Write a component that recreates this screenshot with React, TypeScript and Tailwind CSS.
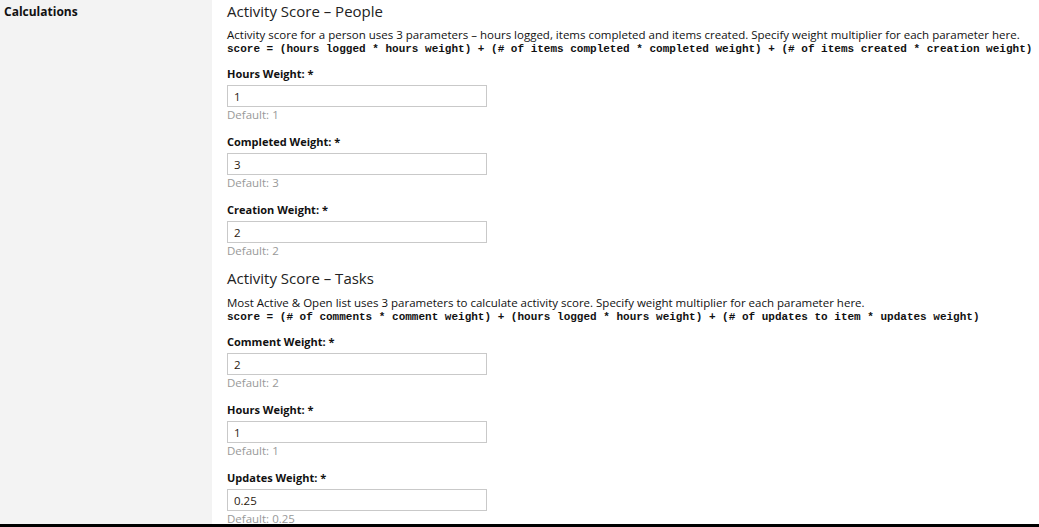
import React from "react";

type Field = { label: string; value: string; def: string };

type Section = {
  title: string;
  desc: string;
  formula: string;
  fields: Field[];
};

const sections: Section[] = [
  {
    title: "Activity Score – People",
    desc: "Activity score for a person uses 3 parameters – hours logged, items completed and items created. Specify weight multiplier for each parameter here.",
    formula:
      "score = (hours logged * hours weight) + (# of items completed * completed weight) + (# of items created * creation weight)",
    fields: [
      { label: "Hours Weight:", value: "1", def: "1" },
      { label: "Completed Weight:", value: "3", def: "3" },
      { label: "Creation Weight:", value: "2", def: "2" },
    ],
  },
  {
    title: "Activity Score – Tasks",
    desc: "Most Active & Open list uses 3 parameters to calculate activity score. Specify weight multiplier for each parameter here.",
    formula:
      "score = (# of comments * comment weight) + (hours logged * hours weight) + (# of updates to item * updates weight)",
    fields: [
      { label: "Comment Weight:", value: "2", def: "2" },
      { label: "Hours Weight:", value: "1", def: "1" },
      { label: "Updates Weight:", value: "0.25", def: "0.25" },
    ],
  },
];

const WeightField = ({ field, first }: { field: Field; first: boolean }) => (
  <div className={`flex flex-col ${first ? "mt-[11px]" : "mt-[13px]"}`}>
    <label className="text-[11px] leading-[14px] font-bold text-[#111]">
      {field.label} *
    </label>
    <input
      readOnly
      value={field.value}
      className="mt-[4px] h-[22px] w-[260px] border border-[#c9c9c9] bg-white px-[6px] text-[11.5px] text-[#2a1a10] outline-none"
    />
    <span className="mt-[1px] text-[11.5px] leading-[14px] text-[#999]">
      Default: {field.def}
    </span>
  </div>
);

export default function App() {
  return (
    <div
      className="flex h-[527px] w-full overflow-hidden border-b-[3px] border-black bg-white"
      style={{ fontFamily: '"Open Sans", "DejaVu Sans", sans-serif' }}
    >
      <aside className="w-[212px] shrink-0 bg-[#f3f3f3] pl-[4px] pt-[4px]">
        <h2 className="text-[12px] leading-[16px] font-bold text-[#111]">
          Calculations
        </h2>
      </aside>

      <main className="flex-1 pl-[15px] pt-[1px]">
        {sections.map((s, i) => (
          <section key={i} className={i > 0 ? "mt-[10px]" : ""}>
            <h3 className="text-[15px] leading-[20px] text-[#222]">{s.title}</h3>
            <p
              className={`${i > 0 ? "mt-[8px]" : "mt-[7px]"} text-[11.5px] leading-[14px] whitespace-nowrap text-[#111]`}
            >
              {s.desc}
            </p>
            <p
              className="text-[11px] leading-[14px] font-bold whitespace-nowrap text-[#111]"
              style={{ fontFamily: '"Liberation Mono", monospace' }}
            >
              {s.formula}
            </p>
            {s.fields.map((f, j) => (
              <WeightField key={j} field={f} first={j === 0} />
            ))}
          </section>
        ))}
      </main>
    </div>
  );
}
